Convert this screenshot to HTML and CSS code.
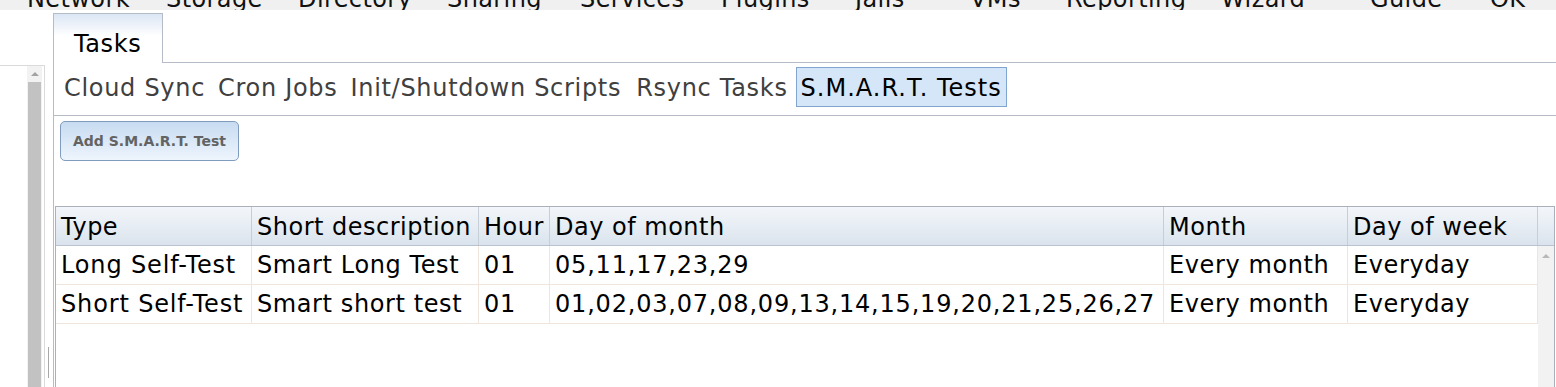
FILE: index.html
```html
<!DOCTYPE html>
<html lang="en">
<head>
<meta charset="utf-8">
<title>Tasks - S.M.A.R.T. Tests</title>
<link rel="stylesheet" href="styles.css">
</head>
<body>
<div class="topbar">
  <div class="menu">
    <span>Network</span><span>Storage</span><span>Directory</span><span>Sharing</span><span>Services</span><span>Plugins</span><span>Jails</span><span>VMs</span><span>Reporting</span><span>Wizard</span><span>Guide</span><span>OK</span>
  </div>
</div>
<div class="main">
  <div class="left">
    <div class="leftbox">
      <div class="vscroll">
        <div class="arrow"><span class="tri"></span></div>
        <div class="thumb"></div>
      </div>
    </div>
    <div class="splitter"><div class="grip"></div></div>
  </div>
  <div class="content">
    <div class="tabrow">
      <div class="tab">Tasks</div>
      <div class="tabfill"></div>
    </div>
    <div class="panel">
      <div class="subtabs">
        <span class="st">Cloud Sync</span>
        <span class="st">Cron Jobs</span>
        <span class="st">Init/Shutdown Scripts</span>
        <span class="st rs">Rsync Tasks</span>
        <span class="st sel">S.M.A.R.T. Tests</span>
      </div>
      <div class="toolbar">
        <button class="btn" type="button">Add S.M.A.R.T. Test</button>
      </div>
      <div class="grid">
        <div class="ghead">
          <div class="hc">Type</div>
          <div class="hc">Short description</div>
          <div class="hc">Hour</div>
          <div class="hc">Day of month</div>
          <div class="hc">Month</div>
          <div class="hc">Day of week</div>
          <div class="hfill"></div>
        </div>
        <div class="gbody">
          <div class="rows">
            <div class="row">
              <div class="txt">Long Self-Test</div>
              <div>Smart Long Test</div>
              <div class="num">01</div>
              <div class="num">05,11,17,23,29</div>
              <div>Every month</div>
              <div>Everyday</div>
            </div>
            <div class="row">
              <div class="txt">Short Self-Test</div>
              <div>Smart short test</div>
              <div class="num">01</div>
              <div class="num">01,02,03,07,08,09,13,14,15,19,20,21,25,26,27</div>
              <div>Every month</div>
              <div>Everyday</div>
            </div>
          </div>
          <div class="vbar">
            <div class="arrow"><span class="tri light"></span></div>
          </div>
        </div>
      </div>
    </div>
  </div>
</div>
</body>
</html>
```
FILE: styles.css
```css
html, body {
  margin: 0;
  padding: 0;
}
body {
  font-family: "DejaVu Sans", Verdana, sans-serif;
  background: #ffffff;
  color: #000;
  height: 387px;
  overflow: hidden;
}

/* top menu bar (clipped) */
.topbar {
  height: 10px;
  background: #f0f0f0;
  overflow: hidden;
}
.menu {
  display: grid;
  grid-template-columns: 139px 132px 149px 133px 141px 134px 115px 96px 155px 149px 120px auto;
  padding-left: 27px;
  margin-top: -15px;
  font-size: 24px;
  line-height: 28px;
  letter-spacing: 0.4px;
  color: #111;
  white-space: nowrap;
}

/* main layout */
.main {
  display: flex;
  margin-top: 3px;
  height: 374px;
}
.left {
  width: 53px;
  flex-shrink: 0;
  display: flex;
}
.leftbox {
  width: 45px;
  box-sizing: border-box;
  margin-top: 52px;
  border-top: 1px solid #dadada;
  border-right: 1px solid #dadada;
  display: flex;
}
.vscroll {
  width: 15px;
  margin-left: 27px;
  background: #f2f2f2;
  display: flex;
  flex-direction: column;
}
.arrow {
  height: 16px;
  display: flex;
  align-items: center;
  justify-content: center;
}
.tri {
  width: 0;
  height: 0;
  border-left: 4px solid transparent;
  border-right: 4px solid transparent;
  border-bottom: 4px solid #a3a3a3;
}
.tri.light {
  border-bottom-color: #b8b8b8;
}
.thumb {
  flex: 1;
  background: #c2c2c2;
  margin: 0 1px;
}
.splitter {
  flex: 1;
  padding-top: 334px;
}
.grip {
  width: 1px;
  height: 31px;
  margin-left: 3px;
  background: #a8a8a8;
}

.content {
  flex: 1;
  min-width: 0;
  display: flex;
  flex-direction: column;
}
.tabrow {
  display: flex;
  height: 50px;
}
.tab {
  width: 110px;
  box-sizing: border-box;
  border: 1px solid #b5bcc7;
  border-bottom: none;
  background: linear-gradient(#dbe6f5, #ffffff 45%);
  font-size: 24px;
  line-height: 28px;
  letter-spacing: 0.6px;
  padding: 16px 0 0 20px;
  color: #000;
}
.tabfill {
  flex: 1;
  border-bottom: 1px solid #b5bcc7;
}

.panel {
  flex: 1;
  min-height: 0;
  border-left: 1px solid #b5bcc7;
  display: flex;
  flex-direction: column;
}
.subtabs {
  display: flex;
  gap: 3px;
  padding: 4px 0 8px 5px;
  border-bottom: 1px solid #b5bcc7;
}
.st {
  border: 1px solid transparent;
  padding: 3px 4px 0;
  line-height: 35px;
  font-size: 24px;
  letter-spacing: 0.7px;
  color: #404040;
  white-space: nowrap;
}
.st.rs {
  margin-left: 2px;
}
.st.sel {
  background: #d5e6f8;
  border-color: #80a5cf;
  color: #000;
  letter-spacing: 1px;
}

.toolbar {
  padding: 5px 0 0 6px;
}
.btn {
  display: block;
  width: 179px;
  height: 40px;
  box-sizing: border-box;
  border: 1px solid #7f9cbf;
  border-radius: 5px;
  background: linear-gradient(#c7dbf1, #eef5fd);
  font-family: "DejaVu Sans", Verdana, sans-serif;
  font-weight: bold;
  font-size: 14px;
  color: #636363;
  padding: 0 0 0 12px;
  text-align: left;
  white-space: nowrap;
}

/* data grid */
.grid {
  flex: 1;
  min-height: 0;
  margin: 45px 1px 0 1px;
  border: 1px solid #aab1ba;
  border-bottom: none;
  display: flex;
  flex-direction: column;
}
.ghead {
  display: grid;
  grid-template-columns: 196px 227px 71px 614px 184px 190px 1fr;
  background: linear-gradient(#f3f6fa, #dae3ed);
  border-bottom: 1px solid #b9c3cd;
}
.hc {
  border-right: 1px solid #c6ced8;
  padding: 2px 0 0 5px;
  font-size: 24px;
  line-height: 36px;
  letter-spacing: 0.5px;
  white-space: nowrap;
  overflow: hidden;
}
.gbody {
  flex: 1;
  display: flex;
}
.rows {
  width: 1482px;
}
.row {
  display: grid;
  grid-template-columns: 196px 227px 71px 614px 184px 190px;
  border-bottom: 1px solid #efe5dc;
}
.row > div {
  border-right: 1px solid #efe5dc;
  padding: 1px 0 0 5px;
  font-size: 24px;
  line-height: 37px;
  letter-spacing: 0.6px;
  white-space: nowrap;
  overflow: hidden;
}
.row > .txt {
  letter-spacing: 0.85px;
}
.row > .num {
  letter-spacing: 0.8px;
}
.vbar {
  flex: 1;
  background: #f2f2f2;
  padding-top: 2px;
}
```
